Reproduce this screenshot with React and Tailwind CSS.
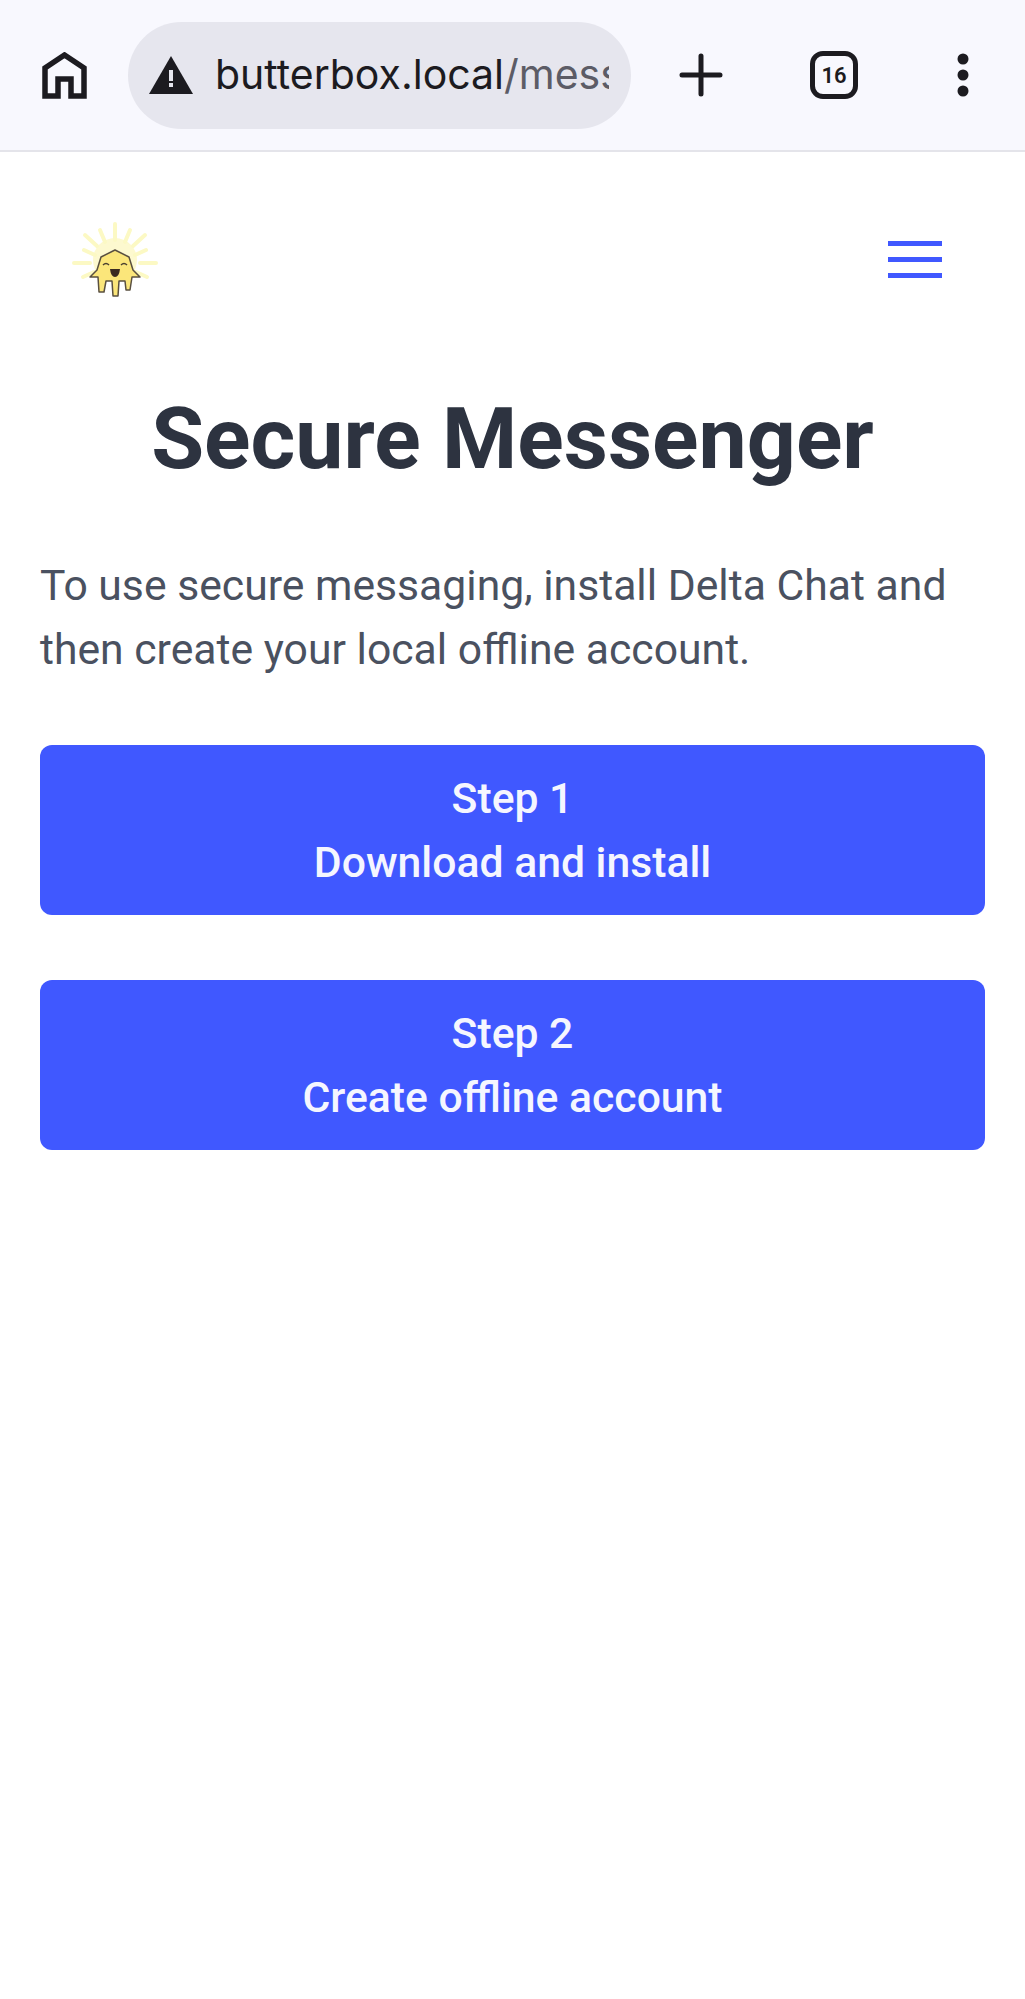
import React from "react";

const HomeIcon = () => (
  <svg width="45" height="47" viewBox="0 0 45 47" fill="none" stroke="#1c1b20" strokeWidth="5.500">
    <path d="M3 44 V16 L22.500 3 L42 16 V44 H29 V27 H16 V44 Z" />
  </svg>
);

const WarningIcon = () => (
  <svg width="44" height="38" viewBox="0 0 44 38">
    <path d="M22 0 L44 38 H0 Z" fill="#1c1b20" />
    <rect x="20" y="14" width="4" height="11" fill="#e6e6ee" />
    <rect x="20" y="27" width="4" height="4" fill="#e6e6ee" />
  </svg>
);

const PlusIcon = () => (
  <svg width="44" height="44" viewBox="0 0 44 44" stroke="#1c1b20" strokeWidth="5" strokeLinecap="round">
    <path d="M22 3 V41 M3 22 H41" />
  </svg>
);

const MoreIcon = () => (
  <svg width="12" height="44" viewBox="0 0 12 44" fill="#1c1b20">
    <circle cx="6" cy="6" r="5.500" />
    <circle cx="6" cy="22" r="5.500" />
    <circle cx="6" cy="38" r="5.500" />
  </svg>
);

const ButterLogo = () => (
  <svg width="90" height="76" viewBox="0 0 90 76">
    <circle cx="45" cy="38" r="22" fill="#fdf9cf" />
    <g stroke="#fcf9c4" strokeWidth="4" strokeLinecap="round">
      <path d="M45 2 V18" />
      <path d="M30 8 L35 20" />
      <path d="M60 8 L55 20" />
      <path d="M15 13 L27 24" />
      <path d="M75 13 L63 24" />
      <path d="M14 28 L25 33" />
      <path d="M76 28 L65 33" />
      <path d="M4 41 H20" />
      <path d="M86 41 H70" />
      <path d="M13 55 L24 50" />
      <path d="M77 55 L66 50" />
    </g>
    <path
      d="M45 28 L59 35 L63 48 L70 55 L62 55 L60 68 L56 68 L55 59 L49 59 L48 74 L43 74 L42 59 L36 59 L34 70 L29 70 L28 55 L20 55 L27 48 L31 35 Z"
      fill="#fbe67a"
      stroke="#5a5040"
      strokeWidth="1.500"
      strokeLinejoin="round"
    />
    <path d="M33 43 Q36 40 39 43 M51 43 Q54 40 57 43" fill="none" stroke="#4a4030" strokeWidth="1.500" />
    <path d="M40 47 H50 Q49 55 45 55 Q41 55 40 47 Z" fill="#3a2a20" />
  </svg>
);

const StepButton = ({ step, label }) => (
  <a className="flex h-[170px] flex-col items-center justify-center rounded-xl bg-[#4058ff] text-center text-[42.700px] font-medium leading-[64px] text-[#f5f6ff]">
    <span>{step}</span>
    <span>{label}</span>
  </a>
);

export default function App() {
  return (
    <div className="min-h-[1999px] bg-white font-['Roboto',sans-serif]">
      <header className="flex h-[152px] items-center border-b-2 border-[#e4e4ea] bg-[#f8f8fe] pl-[42px]">
        <HomeIcon />
        <div className="ml-[41px] flex h-[107px] w-[503px] items-center rounded-full bg-[#e6e6ee] pl-[21px]">
          <WarningIcon />
          <div className="ml-[22px] w-[394px] overflow-hidden whitespace-nowrap font-['Inter',sans-serif] text-[41px] text-[#1c1b20]">
            butterbox.local<span className="text-[#5c5c66]">/messenger</span>
          </div>
        </div>
        <div className="ml-[48px]">
          <PlusIcon />
        </div>
        <div className="ml-[87px] flex h-[48px] w-[48px] items-center justify-center rounded-[13px] border-[5px] border-[#1c1b20] text-[22px] font-semibold text-[#1c1b20]">
          16
        </div>
        <div className="ml-[99px]">
          <MoreIcon />
        </div>
      </header>

      <nav className="flex items-center justify-between pl-[70px] pr-[83px] pt-[70px]">
        <ButterLogo />
        <div className="mb-[2px] flex w-[54px] flex-col gap-[11px]">
          <div className="h-[5px] bg-[#4058ff]" />
          <div className="h-[5px] bg-[#4058ff]" />
          <div className="h-[5px] bg-[#4058ff]" />
        </div>
      </nav>

      <main className="px-[40px]">
        <h1 className="mt-[91px] text-center text-[86px] font-bold leading-[100px] text-[#2d3340]">Secure Messenger</h1>
        <p className="mt-[64px] text-[42.700px] leading-[64px] text-[#4a5160]">
          To use secure messaging, install Delta Chat and then create your local offline account.
        </p>
        <div className="mt-[64px] flex flex-col gap-[65px]">
          <StepButton step="Step 1" label="Download and install" />
          <StepButton step="Step 2" label="Create offline account" />
        </div>
      </main>
    </div>
  );
}
